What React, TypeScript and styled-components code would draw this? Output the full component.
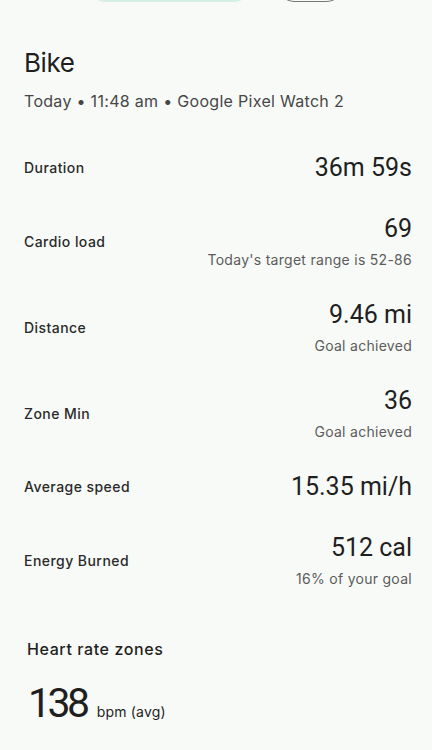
import React from 'react';
import styled, { createGlobalStyle } from 'styled-components';

const GlobalStyle = createGlobalStyle`
  html, body {
    margin: 0;
    padding: 0;
    background: #f8faf7;
  }
  body {
    font-family: Inter, Roboto, Arial, sans-serif;
    color: #1f1f1f;
  }
`;

const Page = styled.div`
  width: 432px;
  min-height: 750px;
  background: #f8faf7;
  overflow: hidden;
`;

const TopActions = styled.div`
  display: flex;
  gap: 22px;
  padding-left: 86px;
  margin-top: -38px;
`;

const PillButton = styled.div<{ $outlined?: boolean; $width: number }>`
  width: ${props => props.$width}px;
  height: 40px;
  box-sizing: border-box;
  border-radius: 20px;
  background: ${props => (props.$outlined ? 'transparent' : '#d6efe5')};
  border: ${props => (props.$outlined ? '1px solid #747775' : 'none')};
`;

const Header = styled.div`
  padding: 0 24px;
  margin-top: 45px;
`;

const Title = styled.h1`
  margin: 0;
  font-size: 26px;
  line-height: 32px;
  font-weight: 400;
  letter-spacing: -0.4px;
  color: #1f1f1f;
`;

const Subtitle = styled.div`
  margin-top: 10px;
  font-size: 16px;
  line-height: 24px;
  letter-spacing: 0.3px;
  color: #474747;
`;

const StatList = styled.div`
  margin-top: 25px;
  display: flex;
  flex-direction: column;
`;

const StatRow = styled.div`
  display: flex;
  justify-content: space-between;
  align-items: center;
  padding: 14px 20px 15px 24px;
`;

const StatLabel = styled.div`
  font-size: 14px;
  line-height: 20px;
  font-weight: 500;
  letter-spacing: 0.45px;
  color: #2a2a2a;
`;

const StatValues = styled.div`
  display: flex;
  flex-direction: column;
  align-items: flex-end;
  gap: 5px;
`;

const StatValue = styled.div`
  font-family: Roboto, Inter, Arial, sans-serif;
  font-size: 25px;
  line-height: 32px;
  font-weight: 400;
  color: #1f1f1f;
`;

const StatNote = styled.div`
  font-size: 14px;
  line-height: 20px;
  letter-spacing: 0.28px;
  color: #5c5c5c;
`;

const HeartSection = styled.div`
  margin-top: 33px;
  padding: 0 27px 0 28px;
`;

const SectionTitle = styled.div`
  font-size: 16px;
  line-height: 24px;
  font-weight: 500;
  letter-spacing: 0.6px;
  color: #1f1f1f;
  margin-left: -1px;
`;

const BigReading = styled.div`
  margin-top: 18px;
  display: flex;
  align-items: baseline;
`;

const BigNumber = styled.span`
  font-family: Roboto, Inter, Arial, sans-serif;
  font-size: 41px;
  line-height: 48px;
  letter-spacing: -3.5px;
  color: #1f1f1f;
`;

const BigUnit = styled.span`
  margin-left: 10px;
  font-size: 14px;
  letter-spacing: 0.2px;
  color: #1f1f1f;
`;

type Stat = {
  label: string;
  value: string;
  note?: string;
};

const stats: Stat[] = [
  { label: 'Duration', value: '36m 59s' },
  { label: 'Cardio load', value: '69', note: "Today's target range is 52-86" },
  { label: 'Distance', value: '9.46 mi', note: 'Goal achieved' },
  { label: 'Zone Min', value: '36', note: 'Goal achieved' },
  { label: 'Average speed', value: '15.35 mi/h' },
  { label: 'Energy Burned', value: '512 cal', note: '16% of your goal' },
];

const App: React.FC = () => {
  return (
    <Page>
      <GlobalStyle />
      <TopActions>
        <PillButton $width={167} />
        <PillButton $width={71} $outlined />
      </TopActions>

      <Header>
        <Title>Bike</Title>
        <Subtitle>Today • 11:48 am • Google Pixel Watch 2</Subtitle>
      </Header>

      <StatList>
        {stats.map(stat => (
          <StatRow key={stat.label}>
            <StatLabel>{stat.label}</StatLabel>
            <StatValues>
              <StatValue>{stat.value}</StatValue>
              {stat.note && <StatNote>{stat.note}</StatNote>}
            </StatValues>
          </StatRow>
        ))}
      </StatList>

      <HeartSection>
        <SectionTitle>Heart rate zones</SectionTitle>
        <BigReading>
          <BigNumber>138</BigNumber>
          <BigUnit>bpm (avg)</BigUnit>
        </BigReading>
      </HeartSection>
    </Page>
  );
};

export default App;
